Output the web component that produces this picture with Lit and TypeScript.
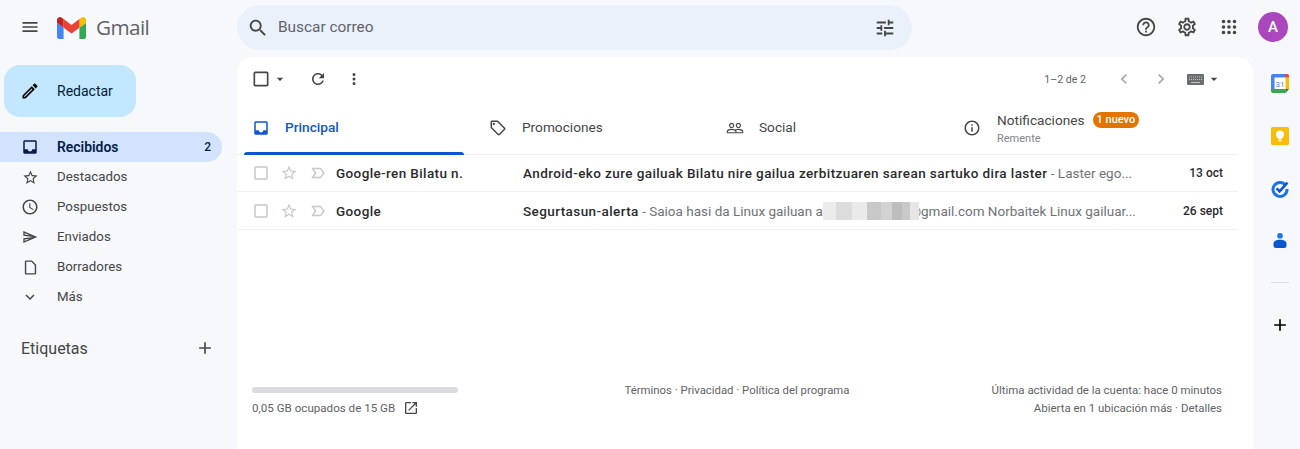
import { LitElement, html, css } from "lit";
import { customElement } from "lit/decorators.js";

const P = {
  menu: "M3 18h18v-2H3v2zm0-5h18v-2H3v2zm0-7v2h18V6H3z",
  search: "M15.5 14h-.79l-.28-.27C15.41 12.59 16 11.11 16 9.5 16 5.91 13.09 3 9.5 3S3 5.91 3 9.5 5.91 16 9.5 16c1.61 0 3.09-.59 4.23-1.57l.27.28v.79l5 4.99L20.49 19l-4.99-5zm-6 0C7.01 14 5 11.99 5 9.5S7.01 5 9.5 5 14 7.01 14 9.5 11.99 14 9.5 14z",
  tune: "M3 17v2h6v-2H3zM3 5v2h10V5H3zm10 16v-2h8v-2h-8v-2h-2v6h2zM7 9v2H3v2h4v2h2V9H7zm14 4v-2H11v2h10zm-6-4h2V7h4V5h-4V3h-2v6z",
  help: "M11 18h2v-2h-2v2zm1-16C6.48 2 2 6.48 2 12s4.48 10 10 10 10-4.48 10-10S17.52 2 12 2zm0 18c-4.41 0-8-3.59-8-8s3.59-8 8-8 8 3.59 8 8-3.59 8-8 8zm0-14c-2.21 0-4 1.79-4 4h2c0-1.1.9-2 2-2s2 .9 2 2c0 2-3 1.75-3 5h2c0-2.25 3-2.5 3-5 0-2.21-1.79-4-4-4z",
  gear: "M19.43 12.98c.04-.32.07-.64.07-.98 0-.34-.03-.66-.07-.98l2.11-1.65c.19-.15.24-.42.12-.64l-2-3.46c-.09-.16-.26-.25-.44-.25-.06 0-.12.01-.17.03l-2.49 1c-.52-.4-1.08-.73-1.69-.98l-.38-2.65C14.46 2.18 14.25 2 14 2h-4c-.25 0-.46.18-.49.42l-.38 2.65c-.61.25-1.17.59-1.69.98l-2.49-1c-.06-.02-.12-.03-.18-.03-.17 0-.34.09-.43.25l-2 3.46c-.13.22-.07.49.12.64l2.11 1.65c-.04.32-.07.65-.07.98 0 .33.03.66.07.98l-2.11 1.65c-.19.15-.24.42-.12.64l2 3.46c.09.16.26.25.44.25.06 0 .12-.01.17-.03l2.49-1c.52.4 1.08.73 1.69.98l.38 2.65c.03.24.24.42.49.42h4c.25 0 .46-.18.49-.42l.38-2.65c.61-.25 1.17-.59 1.69-.98l2.49 1c.06.02.12.03.18.03.17 0 .34-.09.43-.25l2-3.46c.12-.22.07-.49-.12-.64l-2.11-1.65zm-1.98-1.71c.04.31.05.52.05.73 0 .21-.02.43-.05.73l-.14 1.13.89.7 1.08.84-.7 1.21-1.27-.51-1.04-.42-.9.68c-.43.32-.84.56-1.25.73l-1.06.43-.16 1.13-.2 1.35h-1.4l-.19-1.35-.16-1.13-1.06-.43c-.43-.18-.83-.41-1.23-.71l-.91-.7-1.06.43-1.27.51-.7-1.21 1.08-.84.89-.7-.14-1.13c-.03-.31-.05-.54-.05-.74s.02-.43.05-.73l.14-1.13-.89-.7-1.08-.84.7-1.21 1.27.51 1.04.42.9-.68c.43-.32.84-.56 1.25-.73l1.06-.43.16-1.13.2-1.35h1.39l.19 1.35.16 1.13 1.06.43c.43.18.83.41 1.23.71l.91.7 1.06-.43 1.27-.51.7 1.21-1.07.85-.89.7.14 1.13zM12 8c-2.21 0-4 1.79-4 4s1.79 4 4 4 4-1.79 4-4-1.79-4-4-4zm0 6c-1.1 0-2-.9-2-2s.9-2 2-2 2 .9 2 2-.9 2-2 2z",
  pencil: "M14.06 9.02l.92.92L5.92 19H5v-.92l9.06-9.06M17.66 3c-.25 0-.51.1-.7.29l-1.83 1.83 3.75 3.75 1.83-1.83c.39-.39.39-1.02 0-1.41l-2.34-2.34c-.2-.2-.45-.29-.71-.29zm-3.6 3.19L3 17.25V21h3.75L17.81 9.94l-3.75-3.75z",
  inboxFill: "M19 3H4.99c-1.11 0-1.98.89-1.98 2L3 19c0 1.1.88 2 1.99 2H19c1.1 0 2-.9 2-2V5c0-1.11-.9-2-2-2zM19 15h-4c0 1.66-1.35 3-3 3s-3-1.34-3-3H4.99V5H19v10z",
  star: "M22 9.24l-7.19-.62L12 2 9.19 8.63 2 9.24l5.46 4.73L5.82 21 12 17.27 18.18 21l-1.63-7.03L22 9.24zM12 15.4l-3.76 2.27 1-4.28-3.32-2.88 4.38-.38L12 6.1l1.71 4.04 4.38.38-3.32 2.88 1 4.28L12 15.4z",
  clock: "M11.99 2C6.47 2 2 6.48 2 12s4.47 10 9.99 10C17.52 22 22 17.52 22 12S17.52 2 11.99 2zM12 20c-4.42 0-8-3.58-8-8s3.58-8 8-8 8 3.58 8 8-3.58 8-8 8zm.5-13H11v6l5.25 3.15.75-1.23-4.5-2.67z",
  send: "M4.01 6.03l7.51 3.22-7.52-1 .01-2.22m7.5 8.72L4 17.97v-2.22l7.51-1M2.01 3L2 10l15 2-15 2 .01 7L23 12 2.01 3z",
  draft: "M14 2H6c-1.1 0-1.99.9-1.99 2L4 20c0 1.1.89 2 1.99 2H18c1.1 0 2-.9 2-2V8l-6-6zM6 20V4h7.17L18 8.83V20H6z",
  expand: "M16.59 8.59L12 13.17 7.41 8.59 6 10l6 6 6-6z",
  plus: "M19 13h-6v6h-2v-6H5v-2h6V5h2v6h6v2z",
  refresh: "M17.65 6.35C16.2 4.9 14.21 4 12 4c-4.42 0-7.99 3.58-7.99 8s3.57 8 7.99 8c3.73 0 6.84-2.55 7.73-6h-2.08c-.82 2.33-3.04 4-5.65 4-3.31 0-6-2.69-6-6s2.69-6 6-6c1.66 0 3.14.69 4.22 1.78L13 11h7V4l-2.35 2.35z",
  important: "M15 19H3l4.5-7L3 5h12c.65 0 1.26.31 1.63.84L21 12l-4.37 6.16c-.37.52-.98.84-1.63.84zm-8.5-2H15l3.5-5L15 7H6.5l3.5 5-3.5 5z",
  tag: "M21.41 11.58l-9-9C12.05 2.22 11.55 2 11 2H4c-1.1 0-2 .9-2 2v7c0 .55.22 1.05.59 1.42l9 9c.36.36.86.58 1.41.58s1.05-.22 1.41-.59l7-7c.37-.36.59-.86.59-1.41s-.23-1.06-.59-1.42zM13 20.01L4 11V4h7v-.01l9 9-7 7.02zM6.5 5A1.5 1.5 0 1 0 6.5 8 1.5 1.5 0 1 0 6.5 5z",
  people: "M16.5 13c-1.2 0-3.07.34-4.5 1-1.43-.67-3.3-1-4.5-1C5.33 13 1 14.08 1 16.25V19h22v-2.75c0-2.17-4.33-3.25-6.5-3.25zm-4 4.5h-10v-1.25c0-.54 2.56-1.75 5-1.75s5 1.21 5 1.75v1.25zm9 0H14v-1.25c0-.46-.2-.86-.52-1.22.88-.3 1.96-.53 3.02-.53 2.44 0 5 1.21 5 1.75v1.25zM7.5 12c1.93 0 3.5-1.57 3.5-3.5S9.43 5 7.5 5 4 6.57 4 8.5 5.57 12 7.5 12zm0-5.5c1.1 0 2 .9 2 2s-.9 2-2 2-2-.9-2-2 .9-2 2-2zm9 5.5c1.93 0 3.5-1.57 3.5-3.5S18.43 5 16.5 5 13 6.57 13 8.5s1.57 3.5 3.5 3.5zm0-5.5c1.1 0 2 .9 2 2s-.9 2-2 2-2-.9-2-2 .9-2 2-2z",
  info: "M11 7h2v2h-2zm0 4h2v6h-2zm1-9C6.48 2 2 6.48 2 12s4.48 10 10 10 10-4.48 10-10S17.52 2 12 2zm0 18c-4.41 0-8-3.59-8-8s3.59-8 8-8 8 3.59 8 8-3.59 8-8 8z",
  left: "M15.41 7.41L14 6l-6 6 6 6 1.41-1.41L10.83 12z",
  right: "M10 6L8.59 7.41 13.17 12l-4.58 4.59L10 18l6-6z",
  open: "M19 19H5V5h7V3H5c-1.11 0-2 .9-2 2v14c0 1.1.89 2 2 2h14c1.1 0 2-.9 2-2v-7h-2v7zM14 3v2h3.59l-9.83 9.83 1.41 1.41L19 6.41V10h2V3h-7z",
  check: "M19 5v14H5V5h14m0-2H5c-1.1 0-2 .9-2 2v14c0 1.1.9 2 2 2h14c1.1 0 2-.9 2-2V5c0-1.1-.9-2-2-2z",
  caret: "M7 10l5 5 5-5z",
  dots: "M12 8a2 2 0 1 0 0-4 2 2 0 0 0 0 4zm0 2a2 2 0 1 0 0 4 2 2 0 0 0 0-4zm0 6a2 2 0 1 0 0 4 2 2 0 0 0 0-4z",
  apps: "M6 8a2 2 0 1 0 0-4 2 2 0 0 0 0 4zm6 0a2 2 0 1 0 0-4 2 2 0 0 0 0 4zm6 0a2 2 0 1 0 0-4 2 2 0 0 0 0 4zM6 14a2 2 0 1 0 0-4 2 2 0 0 0 0 4zm6 0a2 2 0 1 0 0-4 2 2 0 0 0 0 4zm6 0a2 2 0 1 0 0-4 2 2 0 0 0 0 4zM6 20a2 2 0 1 0 0-4 2 2 0 0 0 0 4zm6 0a2 2 0 1 0 0-4 2 2 0 0 0 0 4zm6 0a2 2 0 1 0 0-4 2 2 0 0 0 0 4z",
};

const ic = (d: string, size = 20, cls = "") =>
  html`<svg class="ic ${cls}" width=${size} height=${size} viewBox="0 0 24 24"><path d=${d}></path></svg>`;

const gmailLogo = html`<svg class="logo" width="29" height="22" viewBox="52 42 88 66">
  <path fill="#4285f4" d="M58 108h14V74L52 59v43c0 3.32 2.69 6 6 6"></path>
  <path fill="#34a853" d="M120 108h14c3.32 0 6-2.69 6-6V59l-20 15"></path>
  <path fill="#fbbc04" d="M120 48v26l20-15v-8c0-7.42-8.47-11.65-14.4-7.2"></path>
  <path fill="#ea4335" d="M72 74V48l24 18 24-18v26L96 92"></path>
  <path fill="#c5221f" d="M52 51v8l20 15V48l-5.6-4.2c-5.94-4.45-14.4-.22-14.4 7.2"></path>
</svg>`;

const calendar = html`<svg width="18" height="19" viewBox="0 0 18 19">
  <rect x="0.5" y="0.5" width="17" height="18" rx="1.500" fill="#fff"></rect>
  <path fill="#4285f4" d="M2 0h12v3.500H3.500V15H0V2a2 2 0 0 1 2-2z"></path>
  <path fill="#fbbc04" d="M14.500 3.500H18V15h-3.500z"></path>
  <path fill="#34a853" d="M0 15h14.500v4H2a2 2 0 0 1-2-2z"></path>
  <path fill="#ea4335" d="M14 0h2a2 2 0 0 1 2 2v1.500h-4z"></path>
  <path fill="#188038" d="M14.500 15H18l-3.500 4z"></path>
  <text x="9" y="12.500" text-anchor="middle" font-size="8" font-family="Roboto, sans-serif" fill="#4285f4">31</text>
</svg>`;

const keep = html`<svg width="18" height="18" viewBox="0 0 18 18">
  <rect width="18" height="18" rx="1.500" fill="#fbbc04"></rect>
  <circle cx="9" cy="7.600" r="4" fill="#fff"></circle>
  <rect x="7.200" y="10.500" width="3.600" height="2" fill="#fff"></rect>
  <rect x="7.400" y="13.200" width="3.200" height="1.300" fill="#fff"></rect>
</svg>`;

const tasks = html`<svg width="18" height="18" viewBox="0 0 18 18">
  <path fill="none" stroke="#1a73e8" stroke-width="3" d="M14.600 5.200A7 7 0 1 0 16 9"></path>
  <path fill="none" stroke="#0b57d0" stroke-width="2.600" d="M5.600 8.400 8.600 11.400 16.400 2.600"></path>
</svg>`;

const contacts = html`<svg width="14" height="15" viewBox="0 0 14 15">
  <circle cx="7" cy="2.800" r="2.800" fill="#1a73e8"></circle>
  <path fill="#0b57d0" d="M0.500 10.500c0-2.300 2.900-3.700 6.500-3.700s6.500 1.400 6.500 3.700v2a2.500 2.500 0 0 1-2.500 2.500H3a2.500 2.500 0 0 1-2.500-2.500z"></path>
</svg>`;

const keyboard = html`<svg width="17" height="11" viewBox="0 0 17 11">
  <rect width="17" height="11" rx="1" fill="#6b6e71"></rect>
  <path stroke="#c4c7c9" stroke-width="1" stroke-dasharray="1 1" d="M2 3h13M2 5.500h13"></path>
  <path stroke="#c4c7c9" stroke-width="1" d="M4 8.500h9"></path>
</svg>`;

const NAV = [
  { icon: P.inboxFill, size: 18, label: "Recibidos", count: "2", active: true },
  { icon: P.star, size: 17, label: "Destacados" },
  { icon: P.clock, size: 18, label: "Pospuestos" },
  { icon: P.send, size: 16, label: "Enviados" },
  { icon: P.draft, size: 17, label: "Borradores" },
  { icon: P.expand, size: 18, label: "Más" },
];

@customElement("app-root")
export class AppRoot extends LitElement {
  static styles = css`
    :host {
      display: grid;
      grid-template-columns: 237px 1016px 47px;
      grid-template-rows: 57px 392px;
      width: 1300px;
      height: 449px;
      overflow: hidden;
      background: #f6f8fc;
      font-family: Roboto, "Liberation Sans", sans-serif;
      color: #444746;
    }
    .ic { display: block; flex: none; fill: #444746; }
    .logo { display: block; flex: none; }

    /* top bar */
    .top { grid-column: 1 / -1; display: flex; align-items: flex-start; }
    .brand { width: 237px; height: 54px; display: flex; align-items: center; flex: none; padding-left: 20px; box-sizing: border-box; }
    .brand .logo { margin-left: 17px; margin-top: 1px; }
    .wordmark { font-family: "Open Sans", Roboto, sans-serif; font-size: 20.7px; color: #5f6368; margin-left: 10px; letter-spacing: -0.6px; }
    .search { margin-top: 5px; width: 675px; height: 45px; border-radius: 23px; background: #eaf1fb; display: flex; align-items: center; padding: 0 16px 0 10px; box-sizing: border-box; }
    .search .ph { font-size: 15.4px; color: #5f6368; margin-left: 9px; flex: 1; padding-bottom: 1px; }
    .actions { flex: 1; height: 54px; display: flex; align-items: center; padding-left: 223px; box-sizing: border-box; }
    .actions .g1 { margin-right: 19px; }
    .actions .g2 { margin-right: 20px; }
    .actions .g3 { margin-right: 18px; }
    .avatar { width: 30px; height: 30px; border-radius: 50%; background: #ab47bc; color: #fff; display: flex; align-items: center; justify-content: center; font-size: 15px; font-weight: 500; }

    /* sidebar */
    .side { display: flex; flex-direction: column; }
    .compose { margin: 8px 0 15px 4px; width: 132px; height: 52px; border-radius: 16px; background: #c2e7ff; display: flex; align-items: center; padding-left: 16px; box-sizing: border-box; font-size: 14px; color: #001d35; }
    .compose span { margin-left: 17px; }
    .compose .ic { fill: #000; }
    .nav { display: flex; flex-direction: column; width: 222px; }
    .nav a { height: 30px; display: flex; align-items: center; padding: 0 11px 0 20px; border-radius: 0 15px 15px 0; font-size: 13.3px; color: #444746; }
    .nav .slot { width: 20px; display: flex; justify-content: center; flex: none; }
    .nav a .lbl { margin-left: 17px; flex: 1; padding-bottom: 1px; }
    .nav a.active { background: #d3e3fd; color: #041e49; font-weight: 600; font-size: 13.9px; }
    .nav a.active .ic { fill: #041e49; }
    .nav a .cnt { font-size: 12px; font-weight: 500; }
    .labels { display: flex; align-items: center; justify-content: space-between; margin: 24px 0 0 21px; width: 194px; font-size: 16px; color: #444746; height: 24px; }

    /* main panel */
    .panel { background: #fff; border-radius: 16px 16px 0 0; display: flex; flex-direction: column; padding-right: 15px; }
    .toolbar { height: 44px; display: flex; align-items: center; padding: 0 16px 0 14px; font-size: 10.6px; color: #5f6368; flex: none; }
    .toolbar .caret { margin: 0 0 0 1px; }
    .toolbar .refresh { margin-left: 21px; }
    .toolbar .dots { margin-left: 18px; }
    .toolbar .count { margin-left: auto; margin-right: 28px; }
    .toolbar .pg { fill: #a6a8aa; }
    .toolbar .pg.l { margin-right: 17px; }
    .toolbar .pg.r { margin-right: 16px; }
    .toolbar .kb-c { margin-left: 2px; }
    .tabs { height: 54px; display: grid; grid-template-columns: repeat(4, 237px); padding-left: 7px; border-bottom: 1px solid #eceff1; box-sizing: border-box; flex: none; }
    .tab { position: relative; display: flex; align-items: center; padding-left: 8px; font-size: 13.66px; color: #444746; margin-right: 17px; }
    .tab .ic { margin-right: 15px; }
    .tab > span { padding-bottom: 2px; }
    .tab.info .ic { margin-right: 16px; }
    .tab.on { color: #0b57d0; font-weight: 500; }
    .tab.on .ic { fill: #0b57d0; }
    .tab.on::after { content: ""; position: absolute; left: 0; right: 0; bottom: -1px; height: 3px; border-radius: 3px 3px 0 0; background: #0b57d0; }
    .tab .stack { display: flex; flex-direction: column; padding-top: 2px; }
    .tab .head { display: flex; align-items: center; white-space: nowrap; }
    .badge { margin-left: 8px; background: #e37400; color: #fff; border-radius: 8px; font-size: 11px; font-weight: 500; height: 16px; line-height: 16px; padding: 0 4px; }
    .tab .sub { font-size: 11px; color: #80868b; margin-top: 4px; }

    .row { height: 37px; display: grid; grid-template-columns: 18px 10px 18px 11px 18px 9px 187px 1fr auto; align-items: center; padding: 0 15px; border-bottom: 1px solid #eff1f2; box-sizing: border-box; font-size: 13.5px; color: #2a2b2d; flex: none; }
    .row + .row { height: 38px; }
    .row .box { grid-column: 1; }
    .row .st { grid-column: 3; }
    .row .imp { grid-column: 5; }
    .row .ic { fill: #c6c8ca; }
    .row .from { grid-column: 7; font-weight: 500; letter-spacing: 0.38px; }
    .row .body { grid-column: 8; white-space: nowrap; overflow: hidden; }
    .row b { font-weight: 500; letter-spacing: 0.41px; }
    .row .snip { color: #6f7377; font-size: 13.5px; }
    .row .date { grid-column: 9; font-size: 12px; font-weight: 500; text-align: right; padding-left: 40px; }
    .mosaic { position: relative; display: inline-block; width: 96px; height: 18px; margin-right: -10px; vertical-align: -4px; background: linear-gradient(90deg, #ececec 0 14%, #dcdcdc 14% 30%, #eaeaea 30% 46%, #c8c8c8 46% 60%, #d2d2d2 60% 72%, #bdbdbd 72% 82%, #c9c9c9 82% 91%, #e6e6e6 91% 100%); }

    .foot { margin-top: auto; height: 62px; flex: none; display: grid; grid-template-columns: 1fr 1fr 1fr; padding: 0 16px 0 15px; font-size: 11.6px; color: #5f6368; box-sizing: border-box; }
    .storage { display: flex; flex-direction: column; }
    .bar { width: 206px; height: 6px; border-radius: 3px; background: #dadce0; }
    .used { display: flex; align-items: center; gap: 8px; margin-top: 7px; }
    .links { text-align: center; margin-top: -4px; font-size: 11.35px; }
    .activity { text-align: right; line-height: 18px; margin-top: -6px; font-size: 11.45px; }

    /* rail */
    .rail { display: flex; flex-direction: column; align-items: center; padding: 17px 0 0 6px; box-sizing: border-box; }
    .rail > * { flex: none; display: block; }
    .rail .r2 { margin-top: 34px; }
    .rail .r3 { margin-top: 31px; }
    .rail .r4 { margin-top: 31px; }
    .rail hr { width: 18px; height: 1px; border: 0; background: #dadce0; margin: 30px 0 32px; }
    .rail .ic { fill: #000; }
  `;

  render() {
    return html`
      <header class="top">
        <div class="brand">${ic(P.menu, 20)}${gmailLogo}<span class="wordmark">Gmail</span></div>
        <div class="search">${ic(P.search, 22)}<span class="ph">Buscar correo</span>${ic(P.tune, 22)}</div>
        <div class="actions">
          <span class="g1">${ic(P.help, 22)}</span>
          <span class="g2">${ic(P.gear, 22)}</span>
          <span class="g3">${ic(P.apps, 22)}</span>
          <span class="avatar">A</span>
        </div>
      </header>

      <aside class="side">
        <div class="compose">${ic(P.pencil, 20)}<span>Redactar</span></div>
        <nav class="nav">
          ${NAV.map(
            (n) => html`<a class=${n.active ? "active" : ""}><span class="slot">${ic(n.icon, n.size)}</span><span class="lbl">${n.label}</span>${n.count ? html`<span class="cnt">${n.count}</span>` : ""}</a>`
          )}
        </nav>
        <div class="labels"><span>Etiquetas</span>${ic(P.plus, 20)}</div>
      </aside>

      <main class="panel">
        <div class="toolbar">
          ${ic(P.check, 20)}<span class="caret">${ic(P.caret, 16)}</span>
          <span class="refresh">${ic(P.refresh, 18)}</span>
          <span class="dots">${ic(P.dots, 18)}</span>
          <span class="count">1–2 de 2</span>
          <span class="pg l">${ic(P.left, 20, "pg")}</span>
          <span class="pg r">${ic(P.right, 20, "pg")}</span>
          ${keyboard}
          <span class="kb-c">${ic(P.caret, 16)}</span>
        </div>
        <div class="tabs">
          <div class="tab on">${ic(P.inboxFill, 18)}<span>Principal</span></div>
          <div class="tab">${ic(P.tag, 18)}<span>Promociones</span></div>
          <div class="tab">${ic(P.people, 18)}<span>Social</span></div>
          <div class="tab info">${ic(P.info, 18)}
            <div class="stack">
              <div class="head"><span>Notificaciones</span><span class="badge">1 nuevo</span></div>
              <span class="sub">Remente</span>
            </div>
          </div>
        </div>
        <div class="row">
          <span class="box">${ic(P.check, 18)}</span><span class="st">${ic(P.star, 18)}</span><span class="imp">${ic(P.important, 18)}</span>
          <span class="from">Google-ren Bilatu n.</span>
          <span class="body"><b>Android-eko zure gailuak Bilatu nire gailua zerbitzuaren sarean sartuko dira laster</b><span class="snip"> - Laster ego...</span></span>
          <span class="date">13 oct</span>
        </div>
        <div class="row">
          <span class="box">${ic(P.check, 18)}</span><span class="st">${ic(P.star, 18)}</span><span class="imp">${ic(P.important, 18)}</span>
          <span class="from">Google</span>
          <span class="body"><b>Segurtasun-alerta</b><span class="snip"> - Saioa hasi da Linux gailuan a<span class="mosaic"></span>@gmail.com Norbaitek Linux gailuar...</span></span>
          <span class="date">26 sept</span>
        </div>
        <footer class="foot">
          <div class="storage">
            <div class="bar"></div>
            <div class="used"><span>0,05 GB ocupados de 15 GB</span>${ic(P.open, 16)}</div>
          </div>
          <div class="links">Términos · Privacidad · Política del programa</div>
          <div class="activity">Última actividad de la cuenta: hace 0 minutos<br />Abierta en 1 ubicación más · Detalles</div>
        </footer>
      </main>

      <aside class="rail">
        ${calendar}
        <span class="r2">${keep}</span>
        <span class="r3">${tasks}</span>
        <span class="r4">${contacts}</span>
        <hr />
        ${ic(P.plus, 20)}
      </aside>
    `;
  }
}
